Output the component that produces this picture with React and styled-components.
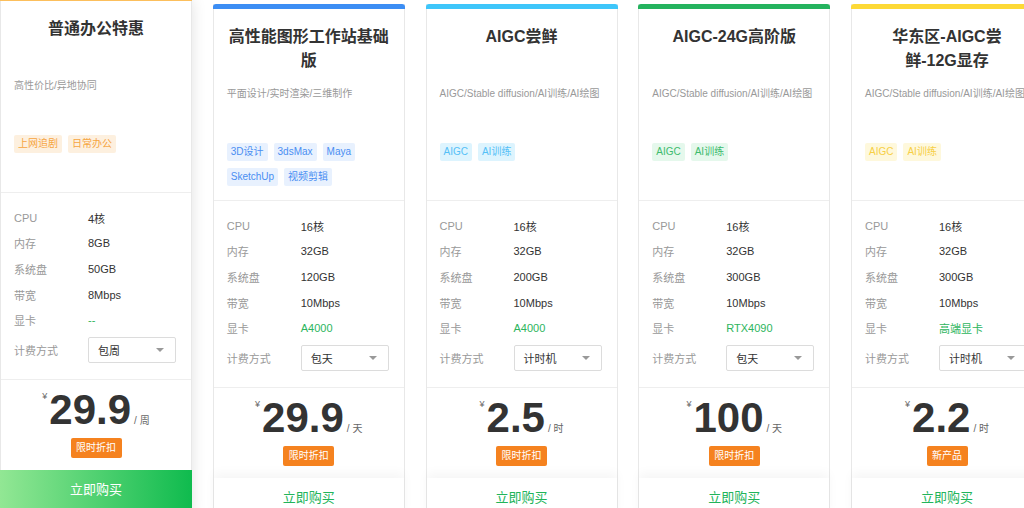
import React from 'react';
import styled, { createGlobalStyle, css } from 'styled-components';

const GlobalStyle = createGlobalStyle`
  html, body { margin: 0; padding: 0; background: #fff; overflow: hidden; }
  body { font-family: "Liberation Sans", "Noto Sans CJK SC", sans-serif; }
`;

const Row = styled.div`
  display: flex;
  align-items: flex-start;
  gap: 20.75px;
  padding-top: 4px;
  width: 1024px;
  height: 508px;
  box-sizing: border-box;
  overflow: hidden;
`;

const Card = styled.div`
  flex: 0 0 192px;
  width: 192px;
  box-sizing: border-box;
  background: #fff;
  border: 1px solid #e8e8e8;
  border-top: none;
  ${(p) =>
    p.$active &&
    css`
      position: relative;
      z-index: 1;
      transform: translateY(-8px);
      box-shadow: 0 4px 14px rgba(0, 0, 0, 0.12);
    `}
`;

const TopBar = styled.div`
  height: 5px;
  margin: 0 -1px;
  border-radius: 3px 3px 0 0;
  background: ${(p) => p.$color};
`;

const Header = styled.div`
  height: 192px;
  box-sizing: border-box;
  padding: 16px 13px 0;
  border-bottom: 1px solid #eee;
`;

const Title = styled.div`
  height: 48px;
  font-size: 16px;
  font-weight: bold;
  line-height: 24px;
  color: #333;
  text-align: center;
  white-space: pre-line;
`;

const Desc = styled.div`
  margin-top: 13px;
  height: 32px;
  font-size: 10px;
  line-height: 16px;
  color: #999;
  white-space: nowrap;
`;

const Tags = styled.div`
  display: flex;
  flex-wrap: wrap;
  gap: 7px 6px;
  margin-top: 25px;
`;

const Tag = styled.span`
  height: 18px;
  padding: 0 4px;
  font-size: 10px;
  line-height: 18px;
  border-radius: 2px;
  color: ${(p) => p.$fg};
  background: ${(p) => p.$bg};
`;

const Specs = styled.div`
  padding: 12px 13px 16px;
  border-bottom: 1px solid #eee;
`;

const SpecRow = styled.div`
  display: flex;
  align-items: center;
  height: 25.6px;
  font-size: 11px;
`;

const Label = styled.span`
  width: 74px;
  flex-shrink: 0;
  color: #999;
`;

const Value = styled.span`
  color: ${(p) => (p.$green ? '#2db55d' : '#333')};
`;

const SelectRow = styled(SpecRow)`
  height: 26px;
  margin-top: 4px;
`;

const Select = styled.div`
  display: flex;
  align-items: center;
  justify-content: space-between;
  width: 88px;
  height: 26px;
  box-sizing: border-box;
  padding: 0 9px;
  border: 1px solid #dcdcdc;
  border-radius: 2px;
  font-size: 11px;
  color: #333;
`;

const Caret = styled.span`
  width: 0;
  height: 0;
  margin-right: 2px;
  border-left: 4px solid transparent;
  border-right: 4px solid transparent;
  border-top: 4px solid #999;
`;

const PriceSection = styled.div`
  display: flex;
  flex-direction: column;
  align-items: center;
  padding: 9px 0 12px;
`;

const PriceLine = styled.div`
  display: flex;
  align-items: baseline;
`;

const Currency = styled.span`
  align-self: flex-start;
  margin: 1px 2px 0 0;
  font-size: 9px;
  line-height: 12px;
  color: #666;
`;

const Amount = styled.span`
  font-family: "Liberation Sans", sans-serif;
  font-size: 42px;
  font-weight: bold;
  line-height: 42px;
  color: #333;
`;

const Unit = styled.span`
  margin-left: 3px;
  font-size: 10px;
  color: #666;
`;

const Badge = styled.span`
  margin-top: 7px;
  height: 20px;
  padding: 0 5.5px;
  font-size: 10px;
  line-height: 20px;
  color: #fff;
  background: #f5821f;
  border-radius: 2px;
`;

const BuyButton = styled.div`
  position: relative;
  height: 40px;
  font-size: 13px;
  line-height: 40px;
  text-align: center;
  color: #22b45a;
  background: #fff;
  box-shadow: 0 -5px 10px rgba(0, 0, 0, 0.04);
  ${(p) =>
    p.$active &&
    css`
      margin: 0 -1px;
      color: #fff;
      background: linear-gradient(90deg, #92e794, #0fbb4e);
      box-shadow: none;
    `}
`;

const PALETTES = {
  orange: { bar: '#fcbf5c', fg: '#f6a53f', bg: '#fdf0df' },
  blue: { bar: '#3c8ef4', fg: '#4a8ef2', bg: '#e8f1fe' },
  sky: { bar: '#3ec6fa', fg: '#55c0f7', bg: '#ddf4fe' },
  green: { bar: '#24b35e', fg: '#3dbb6d', bg: '#e5f8ec' },
  yellow: { bar: '#fdd936', fg: '#f7cf45', bg: '#fef8dc' },
};

const AIGC_DESC = 'AIGC/Stable diffusion/AI训练/AI绘图';

const plans = [
  {
    palette: 'orange',
    title: '普通办公特惠',
    desc: '高性价比/异地协同',
    tags: ['上网追剧', '日常办公'],
    specs: ['4核', '8GB', '50GB', '8Mbps', '--'],
    billing: '包周',
    price: '29.9',
    unit: '周',
    badge: '限时折扣',
    active: true,
  },
  {
    palette: 'blue',
    title: '高性能图形工作站基础版',
    desc: '平面设计/实时渲染/三维制作',
    tags: ['3D设计', '3dsMax', 'Maya', 'SketchUp', '视频剪辑'],
    specs: ['16核', '32GB', '120GB', '10Mbps', 'A4000'],
    billing: '包天',
    price: '29.9',
    unit: '天',
    badge: '限时折扣',
  },
  {
    palette: 'sky',
    title: 'AIGC尝鲜',
    desc: AIGC_DESC,
    tags: ['AIGC', 'AI训练'],
    specs: ['16核', '32GB', '200GB', '10Mbps', 'A4000'],
    billing: '计时机',
    price: '2.5',
    unit: '时',
    badge: '限时折扣',
  },
  {
    palette: 'green',
    title: 'AIGC-24G高阶版',
    desc: AIGC_DESC,
    tags: ['AIGC', 'AI训练'],
    specs: ['16核', '32GB', '300GB', '10Mbps', 'RTX4090'],
    billing: '包天',
    price: '100',
    unit: '天',
    badge: '限时折扣',
  },
  {
    palette: 'yellow',
    title: '华东区-AIGC尝\n鲜-12G显存',
    desc: AIGC_DESC,
    tags: ['AIGC', 'AI训练'],
    specs: ['16核', '32GB', '300GB', '10Mbps', '高端显卡'],
    billing: '计时机',
    price: '2.2',
    unit: '时',
    badge: '新产品',
  },
];

const LABELS = ['CPU', '内存', '系统盘', '带宽', '显卡'];

function PlanCard({ plan }) {
  const pal = PALETTES[plan.palette];
  return (
    <Card $active={plan.active}>
      <TopBar $color={pal.bar} />
      <Header>
        <Title>{plan.title}</Title>
        <Desc>{plan.desc}</Desc>
        <Tags>
          {plan.tags.map((t) => (
            <Tag key={t} $fg={pal.fg} $bg={pal.bg}>
              {t}
            </Tag>
          ))}
        </Tags>
      </Header>
      <Specs>
        {LABELS.map((l, i) => (
          <SpecRow key={l}>
            <Label>{l}</Label>
            <Value $green={i === 4}>{plan.specs[i]}</Value>
          </SpecRow>
        ))}
        <SelectRow>
          <Label>计费方式</Label>
          <Select>
            <span>{plan.billing}</span>
            <Caret />
          </Select>
        </SelectRow>
      </Specs>
      <PriceSection>
        <PriceLine>
          <Currency>¥</Currency>
          <Amount>{plan.price}</Amount>
          <Unit>/ {plan.unit}</Unit>
        </PriceLine>
        <Badge>{plan.badge}</Badge>
      </PriceSection>
      <BuyButton $active={plan.active}>立即购买</BuyButton>
    </Card>
  );
}

export default function App() {
  return (
    <>
      <GlobalStyle />
      <Row>
        {plans.map((p) => (
          <PlanCard key={p.title} plan={p} />
        ))}
      </Row>
    </>
  );
}
